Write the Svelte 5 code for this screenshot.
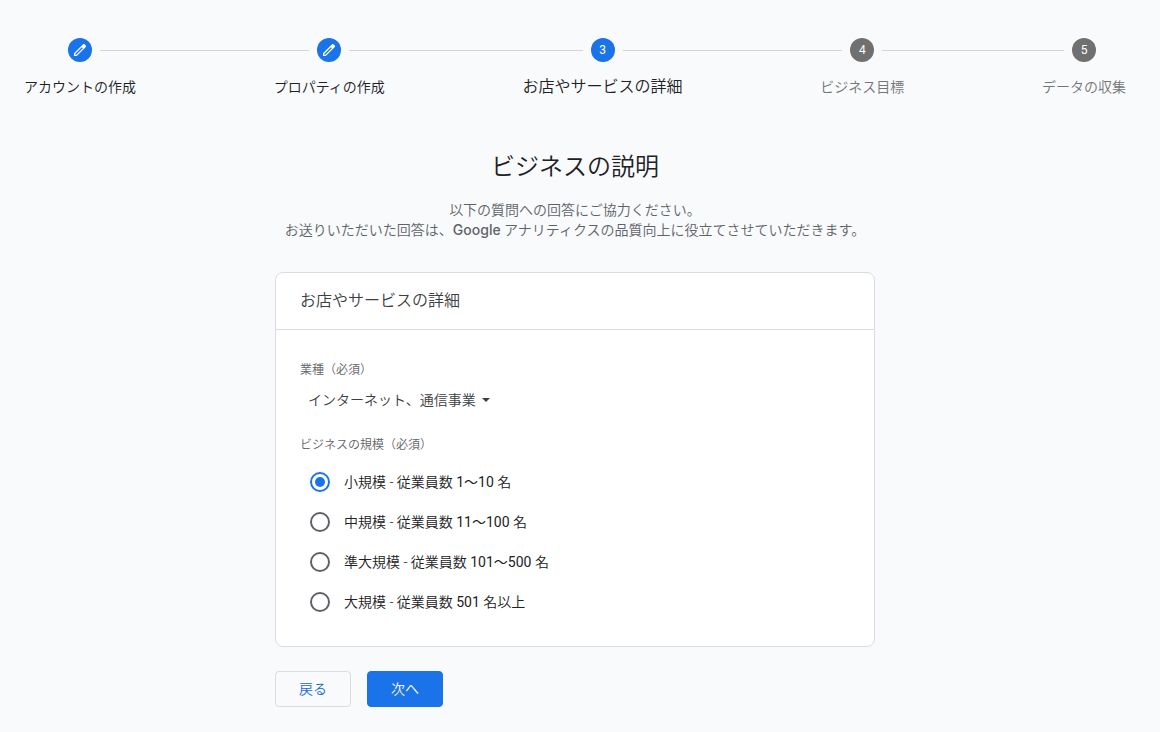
<script>
  const steps = [
    { label: 'アカウントの作成', status: 'done' },
    { label: 'プロパティの作成', status: 'done' },
    { label: 'お店やサービスの詳細', status: 'active' },
    { label: 'ビジネス目標', status: 'todo' },
    { label: 'データの収集', status: 'todo' },
  ];

  const sizes = [
    { value: 'small', name: '小規模', range: '1〜10', unit: '名' },
    { value: 'medium', name: '中規模', range: '11〜100', unit: '名' },
    { value: 'large', name: '準大規模', range: '101〜500', unit: '名' },
    { value: 'xlarge', name: '大規模', range: '501', unit: '名以上' },
  ];

  const industries = ['インターネット、通信事業'];

  let industry = $state(industries[0]);
  let size = $state('small');
</script>

<div class="page">
  <ol class="stepper">
    {#each steps as step, i}
      {#if i > 0}
        <li class="connector" aria-hidden="true"></li>
      {/if}
      <li class="step {step.status}" aria-current={step.status === 'active' ? 'step' : undefined}>
        <div class="track">
          <span class="badge">
            {#if step.status === 'done'}
              <svg width="16" height="16" viewBox="0 0 24 24" fill="#fff" aria-hidden="true">
                <path d="M20.41 4.94l-1.35-1.35c-.78-.78-2.05-.78-2.83 0L3 16.82V21h4.18L20.41 7.77c.79-.78.79-2.05 0-2.83zm-14 14.12L5 19v-1.36l9.82-9.82 1.41 1.41-9.82 9.83z" />
              </svg>
            {:else}
              {i + 1}
            {/if}
          </span>
        </div>
        <span class="step-label">{step.label}</span>
      </li>
    {/each}
  </ol>

  <main>
    <h1>ビジネスの説明</h1>
    <p class="intro">
      以下の質問への回答にご協力ください。<br />
      お送りいただいた回答は、<b>Google</b> アナリティクスの品質向上に役立てさせていただきます。
    </p>

    <form onsubmit={(e) => e.preventDefault()}>
      <section class="card">
        <h2>お店やサービスの詳細</h2>
        <div class="card-body">
          <label class="field-label" for="industry">業種（必須）</label>
          <div class="select">
            <select id="industry" bind:value={industry}>
              {#each industries as name}
                <option value={name}>{name}</option>
              {/each}
            </select>
            <svg width="8" height="4" viewBox="0 0 8 4" fill="#3c4043" aria-hidden="true">
              <path d="M0 0h8L4 4z" />
            </svg>
          </div>

          <fieldset>
            <legend class="field-label">ビジネスの規模（必須）</legend>
            {#each sizes as option}
              <label class="radio">
                <input type="radio" name="size" value={option.value} bind:group={size} />
                <span>{option.name} - 従業員数 <span class="range">{option.range}</span> {option.unit}</span>
              </label>
            {/each}
          </fieldset>
        </div>
      </section>

      <div class="actions">
        <button type="button">戻る</button>
        <button type="submit" class="primary">次へ</button>
      </div>
    </form>
  </main>
</div>

<style>
  :global(body) {
    background: #f8fafc;
  }

  /* 350 picks the DemiLight cut of Noto Sans CJK */
  .page {
    padding: 38px 10px 24px 0;
    font-family: Roboto, 'Noto Sans CJK JP', sans-serif;
    font-size: 14px;
    font-weight: 350;
    line-height: 20px;
    color: #202124;
  }

  .stepper {
    display: flex;
    margin: 0;
    padding: 0;
    list-style: none;
  }

  .connector {
    flex: 1;
    height: 1px;
    margin-top: 12px;
    background: #d3d5d9;
  }

  .step {
    display: flex;
    flex-direction: column;
    gap: 15px;
    text-align: center;
    white-space: nowrap;
  }

  .track {
    display: flex;
    align-items: center;
    gap: 8px;
  }

  .track::before,
  .track::after {
    content: '';
    flex: 1;
    height: 1px;
    background: #d3d5d9;
  }

  .step:first-child .track::before,
  .step:last-child .track::after {
    background: none;
  }

  .badge {
    display: flex;
    align-items: center;
    justify-content: center;
    width: 24px;
    height: 24px;
    border-radius: 50%;
    background: #1a73e8;
    color: #fff;
    font-size: 12px;
    font-weight: 400;
  }

  .step-label {
    padding: 0 24px;
  }

  .active .step-label {
    font-size: 16px;
  }

  .todo .badge {
    background: #707070;
  }

  .todo .step-label {
    color: #757575;
  }

  main {
    max-width: 600px;
    margin: 0 auto;
    padding-top: 54px;
  }

  h1 {
    margin: 0;
    font-size: 24px;
    font-weight: 350;
    line-height: 32px;
    text-align: center;
  }

  .intro {
    margin: 17px 0 32px;
    color: #5f6368;
    text-align: center;
  }

  .intro b {
    font-family: Inter, sans-serif;
    font-weight: 500;
  }

  .card {
    border: 1px solid #dadce0;
    border-radius: 8px;
    background: #fff;
  }

  h2 {
    margin: 0;
    padding: 16px 24px;
    border-bottom: 1px solid #dadce0;
    font-size: 16px;
    font-weight: 350;
    line-height: 24px;
    color: #3c4043;
  }

  .card-body {
    padding: 32px 24px 24px;
  }

  .field-label {
    display: block;
    padding: 0;
    font-size: 12px;
    line-height: 16px;
    color: #5f6368;
  }

  .select {
    display: flex;
    align-items: center;
    gap: 6px;
    height: 30px;
    margin: 7px 0 22px;
    padding-left: 8px;
  }

  select {
    appearance: none;
    margin: 0;
    padding: 0;
    border: 0;
    background: none;
    color: #3c4043;
    font: inherit;
    cursor: pointer;
  }

  fieldset {
    margin: 0;
    padding: 0;
    border: 0;
  }

  legend {
    margin-bottom: 9px;
  }

  .radio {
    display: flex;
    align-items: center;
    gap: 14px;
    height: 40px;
    padding-left: 10px;
    cursor: pointer;
  }

  .radio input {
    appearance: none;
    display: grid;
    place-items: center;
    width: 20px;
    height: 20px;
    margin: 0;
    border: 2px solid #5f6368;
    border-radius: 50%;
  }

  .radio input:checked {
    border-color: #1a73e8;
  }

  .radio input:checked::before {
    content: '';
    width: 10px;
    height: 10px;
    border-radius: 50%;
    background: #1a73e8;
  }

  .range {
    font-weight: 400;
  }

  .actions {
    display: flex;
    gap: 16px;
    margin-top: 24px;
  }

  button {
    height: 36px;
    padding: 0 23px;
    border: 1px solid #dadce0;
    border-radius: 4px;
    background: none;
    color: #1967d2;
    font: inherit;
    cursor: pointer;
  }

  .primary {
    border-color: #1a73e8;
    background: #1a73e8;
    color: #fff;
  }
</style>
